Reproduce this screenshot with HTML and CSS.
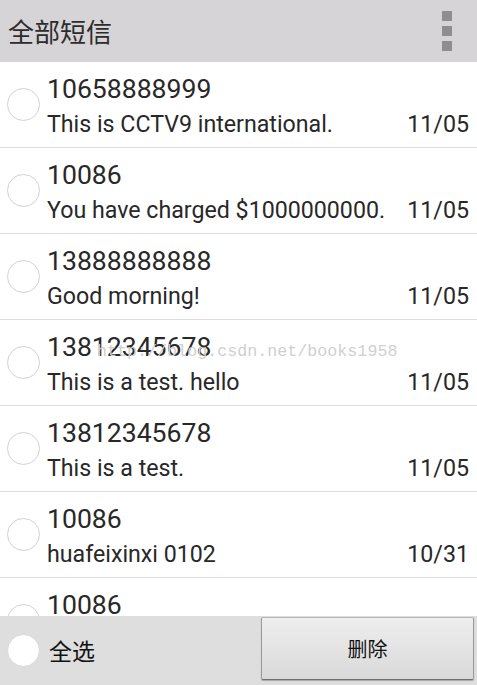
FILE: index.html
```html
<!DOCTYPE html>
<html lang="zh">
<head>
<meta charset="utf-8">
<title>全部短信</title>
<link rel="stylesheet" href="styles.css">
</head>
<body>
<div class="app">
  <header class="header">
    <h1 class="title">全部短信</h1>
    <div class="menu" aria-label="menu">
      <span class="dot"></span><span class="dot"></span><span class="dot"></span>
    </div>
  </header>
  <main class="list">
    <div class="row">
      <span class="radio"></span>
      <div class="content">
        <div class="number">10658888999</div>
        <div class="line"><span class="msg">This is CCTV9 international.</span><span class="date">11/05</span></div>
      </div>
    </div>
    <div class="row">
      <span class="radio"></span>
      <div class="content">
        <div class="number">10086</div>
        <div class="line"><span class="msg">You have charged $1000000000.</span><span class="date">11/05</span></div>
      </div>
    </div>
    <div class="row">
      <span class="radio"></span>
      <div class="content">
        <div class="number">13888888888</div>
        <div class="line"><span class="msg">Good morning!</span><span class="date">11/05</span></div>
      </div>
    </div>
    <div class="row">
      <span class="radio"></span>
      <div class="content">
        <div class="number">13812345678</div>
        <div class="line"><span class="msg">This is a test. hello</span><span class="date">11/05</span></div>
      </div>
      <span class="watermark">http://blog.csdn.net/books1958</span>
    </div>
    <div class="row">
      <span class="radio"></span>
      <div class="content">
        <div class="number">13812345678</div>
        <div class="line"><span class="msg">This is a test.</span><span class="date">11/05</span></div>
      </div>
    </div>
    <div class="row">
      <span class="radio"></span>
      <div class="content">
        <div class="number">10086</div>
        <div class="line"><span class="msg">huafeixinxi 0102</span><span class="date">10/31</span></div>
      </div>
    </div>
    <div class="row">
      <span class="radio"></span>
      <div class="content">
        <div class="number">10086</div>
        <div class="line"><span class="msg">huafeixinxi 0102</span><span class="date">10/31</span></div>
      </div>
    </div>
  </main>
  <footer class="footer">
    <label class="select-all"><span class="radio radio-white"></span><span class="select-label">全选</span></label>
    <button class="delete" type="button">删除</button>
  </footer>
</div>
</body>
</html>
```
FILE: styles.css
```css
* { box-sizing: border-box; }
html, body {
  margin: 0;
  padding: 0;
  width: 477px;
  height: 685px;
  overflow: hidden;
  background: #ffffff;
  font-family: Roboto, "Noto Sans CJK SC", sans-serif;
}
.app {
  display: flex;
  flex-direction: column;
  height: 685px;
}
.header {
  flex: 0 0 62px;
  background: #d6d4d7;
  display: flex;
  align-items: center;
  justify-content: space-between;
  padding: 0 25px 0 8px;
}
.title {
  margin: 0;
  font-family: "Noto Sans CJK SC", sans-serif;
  font-weight: normal;
  font-size: 26px;
  line-height: 30px;
  color: #2c2c2c;
}
.menu {
  display: flex;
  flex-direction: column;
  gap: 5px;
}
.dot {
  display: block;
  width: 10px;
  height: 10px;
  background: #8e8d8f;
}
.list {
  flex: 1 1 auto;
  overflow: hidden;
  background: #ffffff;
}
.row {
  position: relative;
  height: 86px;
  border-bottom: 1px solid #dcdcdc;
  display: flex;
  align-items: flex-start;
}
.radio {
  flex: 0 0 auto;
  width: 33px;
  height: 33px;
  border-radius: 50%;
  border: 1px solid #d2d2d2;
  background: #ffffff;
  margin: 26px 0 0 7px;
}
.content {
  flex: 1 1 auto;
  margin-left: 7px;
  padding: 12px 8px 0 0;
  color: #282828;
}
.number {
  font-size: 26.6px;
  line-height: 30px;
}
.line {
  margin-top: 6px;
  display: flex;
  justify-content: space-between;
  font-size: 23.2px;
  line-height: 28px;
}
.watermark {
  position: absolute;
  left: 97px;
  top: 22px;
  font-family: "Liberation Mono", monospace;
  font-size: 16.7px;
  color: #d0d0d0;
  pointer-events: none;
}
.footer {
  flex: 0 0 69px;
  background: #dedede;
  display: flex;
  align-items: flex-start;
  justify-content: space-between;
  padding: 1px 3px 0 0;
}
.select-all {
  display: flex;
  align-items: center;
  height: 66px;
}
.radio-white {
  margin: 0 0 0 7px;
  border-color: #d8d8d8;
}
.select-label {
  margin-left: 9px;
  font-family: "Noto Sans CJK SC", sans-serif;
  font-size: 23px;
  line-height: 30px;
  color: #111111;
}
.delete {
  width: 213px;
  height: 63px;
  margin: 0;
  border: 1px solid #9a9a9a;
  border-top-color: #b8b8b8;
  border-bottom-color: #6e6e6e;
  border-radius: 2px;
  background: linear-gradient(#eeeeee, #d9d9d9);
  font-family: "Noto Sans CJK SC", sans-serif;
  font-size: 20px;
  color: #111111;
  box-shadow: 0 1px 1px rgba(0,0,0,0.25);
}
```
